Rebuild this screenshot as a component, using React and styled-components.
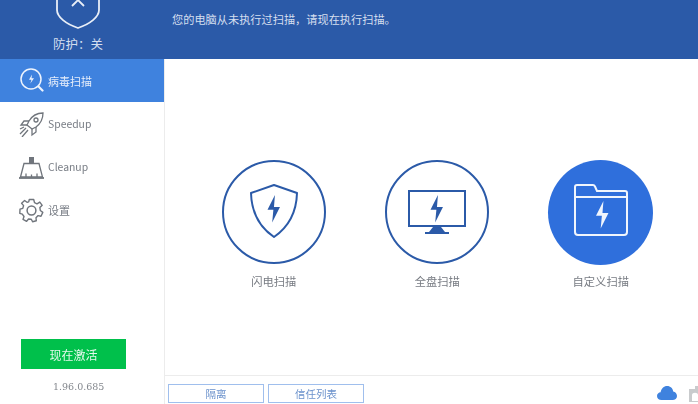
import React from 'react'
import styled, { createGlobalStyle } from 'styled-components'

const GlobalStyle = createGlobalStyle`
  html, body {
    margin: 0;
    padding: 0;
    background: #fff;
    overflow: hidden;
  }
  * {
    box-sizing: border-box;
  }
`

const Page = styled.div`
  width: 698px;
  height: 404px;
  display: flex;
  flex-direction: column;
  overflow: hidden;
  font-family: 'Noto Sans CJK SC', 'Liberation Sans', sans-serif;
  filter: blur(0.4px);
`

const Header = styled.header`
  height: 59px;
  flex: none;
  display: flex;
  background: #2b5aa8;
  overflow: hidden;
`

const Protection = styled.div`
  width: 156px;
  flex: none;
  display: flex;
  flex-direction: column;
  justify-content: flex-end;
  align-items: center;
  padding-bottom: 6px;
  color: #d5dfef;
  font-size: 12.5px;
  line-height: 18px;
  gap: 5px;
`

const Message = styled.div`
  padding: 11px 0 0 16px;
  color: #d5dfef;
  font-size: 11.2px;
  line-height: 17px;
`

const Body = styled.div`
  flex: 1;
  display: flex;
  min-height: 0;
`

const Sidebar = styled.aside`
  width: 165px;
  flex: none;
  display: flex;
  flex-direction: column;
  border-right: 1px solid #ececec;
`

const NavItem = styled.div`
  height: 43.4px;
  flex: none;
  display: flex;
  align-items: center;
  gap: 4px;
  padding-left: 19px;
  font-size: ${(p) => (p.$latin ? '10.4px' : '11px')};
  color: ${(p) => (p.$active ? '#e6eefa' : '#777c84')};
  background: ${(p) => (p.$active ? '#3f82de' : 'transparent')};
`

const NavLabel = styled.span`
  margin-bottom: ${(p) => (p.$active ? '0' : '2px')};
`

const NavIcon = styled.svg`
  width: 25px;
  height: 25px;
  flex: none;
  fill: none;
  stroke: ${(p) => p.$color || '#70757c'};
  stroke-width: 1.3;
`

const SideFooter = styled.div`
  margin-top: auto;
  display: flex;
  flex-direction: column;
  align-items: flex-start;
  padding: 0 0 9px 21px;
  gap: 10px;
`

const ActivateButton = styled.button`
  width: 105px;
  height: 30px;
  border: 0;
  padding: 0;
  background: #00c04b;
  color: #e4f8ec;
  font-family: inherit;
  font-size: 12px;
`

const Version = styled.div`
  padding-left: 32px;
  color: #83878d;
  font-family: 'DejaVu Serif', serif;
  font-size: 9.5px;
  line-height: 16px;
`

const Main = styled.main`
  flex: 1;
  display: flex;
  flex-direction: column;
  min-width: 0;
`

const ScanArea = styled.section`
  flex: 1;
  display: flex;
  align-items: flex-start;
  padding: 101px 0 0 27px;
`

const ScanOption = styled.div`
  width: 163.5px;
  flex: none;
  display: flex;
  flex-direction: column;
  align-items: center;
  color: #777b82;
  font-size: 11.3px;
  line-height: 18px;
`

const ScanCircle = styled.div`
  width: ${(p) => (p.$filled ? '105px' : '104px')};
  height: ${(p) => (p.$filled ? '105px' : '104px')};
  margin-bottom: ${(p) => (p.$filled ? '7px' : '8px')};
  display: flex;
  align-items: center;
  justify-content: center;
  border-radius: 50%;
  border: ${(p) => (p.$filled ? '0' : '2px solid #2b5aa8')};
  background: ${(p) => (p.$filled ? '#2f6fdc' : '#fff')};
`

const FolderIcon = styled.svg`
  width: 56px;
  height: 54px;
  margin-bottom: 5px;
  fill: none;
`

const Toolbar = styled.footer`
  height: 29px;
  flex: none;
  display: flex;
  align-items: flex-start;
  gap: 4px;
  padding: 8px 0 0 3px;
  border-top: 1px solid #ececec;
`

const ToolButton = styled.button`
  width: 96px;
  height: 19px;
  padding: 0;
  background: #fff;
  border: 1px solid #a0bfed;
  color: #6b92cc;
  font-family: inherit;
  font-size: 10.5px;
  line-height: 16px;
`

const ToolIcons = styled.div`
  margin-left: auto;
  display: flex;
  align-items: flex-start;
  gap: 12px;
  width: 41px;
  flex: none;
  overflow: hidden;
`

const CloudIcon = styled.svg`
  width: 20px;
  height: 14px;
  flex: none;
  margin-top: 2px;
`

const LockIcon = styled.svg`
  width: 20px;
  height: 18px;
  flex: none;
`

const Bolt = ({ x, y, s = 1, color }) => (
  <path
    transform={`translate(${x} ${y}) scale(${s})`}
    d="M6.2 0 L0 12.2 H4.9 L3.9 23 L10.4 10 H5.4 Z"
    fill={color}
    stroke="none"
  />
)

export default function App() {
  return (
    <Page>
      <GlobalStyle />
      <Header>
        <Protection>
          <svg width="44" height="30" viewBox="0 0 44 30" fill="none" stroke="#e8eef7">
            <path d="M1 -10 V10 C1 17 10 24 22 28 C34 24 43 17 43 10 V-10" strokeWidth="1.8" />
            <path d="M16 6 L22 0 L28 6" strokeWidth="1.8" />
          </svg>
          <span>防护：关</span>
        </Protection>
        <Message>您的电脑从未执行过扫描，请现在执行扫描。</Message>
      </Header>
      <Body>
        <Sidebar>
          <NavItem $active>
            <NavIcon viewBox="0 0 25 25" $color="#eef4fd">
              <circle cx="12" cy="11" r="10" strokeWidth="1.5" />
              <path d="M19.5 18.5 L23.5 22.5" strokeWidth="2.2" strokeLinecap="round" />
              <path d="M13 6.5 L10 11.7 H12.5 L11.3 15.5 L15 10.3 H12.5 Z" fill="#eef4fd" stroke="none" />
            </NavIcon>
            <NavLabel $active>病毒扫描</NavLabel>
          </NavItem>
          <NavItem $latin>
            <NavIcon viewBox="0 0 25 25">
              <path d="M24 1 C18 1 13 4 10 9 L8 13 L13 17 L17 15 C21 12 24 7 24 1 Z" />
              <circle cx="17" cy="8" r="2" />
              <path d="M10 9 L5 9 L2 13 L8 13" />
              <path d="M17 15 L17 20 L13 23 L13 17" />
              <path d="M7 16 L1 22 M9 18 L3 25 M5 15 L1 17" />
            </NavIcon>
            <NavLabel>Speedup</NavLabel>
          </NavItem>
          <NavItem $latin>
            <NavIcon viewBox="0 0 25 25">
              <path d="M1.5 22 L5 8.5 H20 L23.5 22 Z" />
              <path d="M0 23 H25" strokeWidth="1.8" />
              <rect x="10" y="2" width="5" height="6.5" fill="#70757c" stroke="none" />
              <path d="M7 22 V18.5 M12.5 22 V19.5 M18 22 V18.5" />
            </NavIcon>
            <NavLabel>Cleanup</NavLabel>
          </NavItem>
          <NavItem>
            <NavIcon viewBox="0 0 25 25">
              <circle cx="12.5" cy="12.5" r="4.4" strokeWidth="1.5" />
              <path
                strokeWidth="1.4"
                strokeLinejoin="round"
                d="M10.3 1.5 H14.7 L15.5 4.7 L18 5.8 L20.8 4.1 L23.2 7.3 L20.9 9.6 L21.3 12.5 L23.8 14.4 L22 18.2 L19.1 17.6 L17 19.8 L17.3 22.7 L13.6 23.7 L12.3 21.2 L9.5 21 L7.6 23.4 L4 21.4 L5 18.5 L3.3 16.2 L0.8 15.4 L1 11.2 L3.8 10.3 L4.6 7.6 L2.6 5.3 L5.6 2.5 L8 4.3 L9.7 3.9 Z"
              />
            </NavIcon>
            <NavLabel>设置</NavLabel>
          </NavItem>
          <SideFooter>
            <ActivateButton>现在激活</ActivateButton>
            <Version>1.96.0.685</Version>
          </SideFooter>
        </Sidebar>
        <Main>
          <ScanArea>
            <ScanOption>
              <ScanCircle>
                <svg width="50" height="58" viewBox="0 0 50 58" fill="none">
                  <path
                    d="M25 2 L48 10 C47.5 28 41 43 25 54 C9 43 2.5 28 2 10 Z"
                    stroke="#2b5aa8"
                    strokeWidth="2"
                    strokeLinejoin="round"
                  />
                  <Bolt x={18.5} y={12} s={1.2} color="#2b5aa8" />
                </svg>
              </ScanCircle>
              <span>闪电扫描</span>
            </ScanOption>
            <ScanOption>
              <ScanCircle>
                <svg width="60" height="48" viewBox="0 0 60 48" fill="none">
                  <rect x="2" y="3" width="56" height="35" stroke="#2b5aa8" strokeWidth="2" />
                  <Bolt x={23.5} y={7} s={1.2} color="#2b5aa8" />
                  <path d="M26 39 H34 L38 44 H22 Z" fill="#2b5aa8" />
                  <rect x="18" y="44" width="24" height="2" fill="#2b5aa8" />
                </svg>
              </ScanCircle>
              <span>全盘扫描</span>
            </ScanOption>
            <ScanOption>
              <ScanCircle $filled>
                <FolderIcon viewBox="0 0 56 54">
                  <path
                    d="M2 14 V4 C2 2.5 3 2 4 2 H20 C21 2 21.5 2.5 22 3.5 L24 8 H52 C53.5 8 54 9 54 10 V49 C54 51 53 52 51 52 H5 C3 52 2 51 2 49 Z"
                    stroke="#f0f5fd"
                    strokeWidth="2"
                  />
                  <path d="M2 14 H54" stroke="#f0f5fd" strokeWidth="2" />
                  <Bolt x={23} y={18} s={1.2} color="#f0f5fd" />
                </FolderIcon>
              </ScanCircle>
              <span>自定义扫描</span>
            </ScanOption>
          </ScanArea>
          <Toolbar>
            <ToolButton>隔离</ToolButton>
            <ToolButton>信任列表</ToolButton>
            <ToolIcons>
              <CloudIcon viewBox="0 0 20 14">
                <path
                  d="M4.5 14 C2 14 0 12.4 0 10 C0 7.8 1.6 6.4 3.6 6.2 C4.2 2.6 6.8 0 10.2 0 C13.4 0 15.8 2.4 16.2 5.4 C18.4 5.8 20 7.6 20 10 C20 12.4 18 14 15.6 14 Z"
                  fill="#3f82de"
                />
              </CloudIcon>
              <LockIcon viewBox="0 0 20 18">
                <path d="M0 5 H6 V2 H14 V5 H20 V18 H0 Z" fill="#c9cbcd" />
                <path d="M3 17 V11 C3 8 9 8 9 11 V17" fill="#fff" />
              </LockIcon>
            </ToolIcons>
          </Toolbar>
        </Main>
      </Body>
    </Page>
  )
}
